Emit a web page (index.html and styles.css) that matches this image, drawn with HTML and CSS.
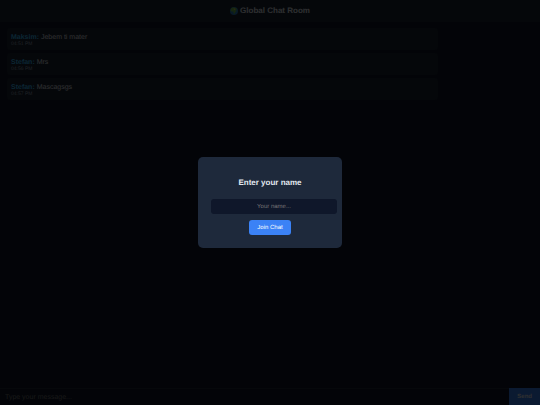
FILE: index.html
```html
<!DOCTYPE html>
<html lang="en">
<head>
    <meta charset="UTF-8">
    <meta name="viewport" content="width=device-width, initial-scale=1.0">
    <title>Global Chat Room</title>
    <link rel="stylesheet" href="styles.css">
</head>
<body>
    <header>
        <svg class="globe" viewBox="0 0 16 16" aria-hidden="true">
            <circle cx="8" cy="8" r="8" fill="#2a7fc4"/>
            <path d="M2 3 L5 1 L9 1 L13 3 L14 5 L11 6 L13 8 L10 11 L9 14 L7 13 L7 9 L3 9 L1 7 Z" fill="#6fbf4b"/>
            <path d="M7 3 L10 3 L11 5 L8 6 Z" fill="#d9c870"/>
        </svg>
        <h1>Global Chat Room</h1>
    </header>

    <main id="messages">
        <div class="message">
            <div><span class="username">Maksim:</span> Jebem ti mater</div>
            <div class="time">04:51 PM</div>
        </div>
        <div class="message">
            <div><span class="username">Stefan:</span> Mrs</div>
            <div class="time">04:56 PM</div>
        </div>
        <div class="message">
            <div><span class="username">Stefan:</span> Mascagsgs</div>
            <div class="time">04:57 PM</div>
        </div>
    </main>

    <form class="input-area">
        <input type="text" id="messageInput" placeholder="Type your message..." aria-label="Message">
        <button type="button">Send</button>
    </form>

    <div class="overlay">
        <div class="modal" role="dialog" aria-labelledby="modalTitle">
            <h2 id="modalTitle">Enter your name</h2>
            <input type="text" id="nameInput" placeholder="Your name..." aria-labelledby="modalTitle">
            <button type="button">Join Chat</button>
        </div>
    </div>
</body>
</html>
```

FILE: styles.css
```css
body {
    margin: 0;
    height: 100vh;
    display: flex;
    flex-direction: column;
    background: #0f172a;
    color: #e2e8f0;
    font-family: "Liberation Sans", Arial, sans-serif;
    font-size: 7px;
    text-rendering: geometricPrecision;
}
header {
    display: flex;
    justify-content: center;
    align-items: center;
    gap: 2px;
    padding: 6px;
    background: #1a2332;
}
.globe {
    width: 8px;
    height: 8px;
}
h1 {
    margin: 0;
    font-size: 8px;
    line-height: 10px;
}
#messages {
    flex: 1;
    display: flex;
    flex-direction: column;
    align-items: flex-start;
    gap: 3px;
    padding: 6px 7px;
    overflow-y: auto;
}
.message {
    box-sizing: border-box;
    width: 82%;
    padding: 5px 4px 3px;
    border-radius: 3px;
    background: #1a2332;
    line-height: 9px;
}
.username {
    color: #38bdf8;
    font-weight: bold;
}
.time {
    color: #94a3b8;
    font-size: 5px;
    line-height: 5px;
}
input,
button {
    border: none;
    outline: none;
    font-family: inherit;
    text-rendering: inherit;
}
input {
    color: #e2e8f0;
}
input::placeholder {
    color: #757575;
}
button {
    background: #3b82f6;
    color: #fff;
    cursor: pointer;
}
.input-area {
    display: flex;
    height: 17px;
    margin: 0;
}
.input-area input {
    flex: 1;
    padding: 0 5px;
    background: #0f172a;
    border-top: 1px solid #1e293b;
    font-size: 7px;
}
.input-area button {
    padding: 0 8px;
    color: #e2e8f0;
    font-size: 6px;
    font-weight: bold;
}
.overlay {
    position: fixed;
    inset: 0;
    display: flex;
    justify-content: center;
    align-items: center;
    background: rgba(0, 0, 0, 0.8);
}
.modal {
    width: 118px;
    padding: 13px;
    display: flex;
    flex-direction: column;
    align-items: center;
    border-radius: 5px;
    background: #1e293b;
}
.modal h2 {
    margin: 8px 0 11px;
    font-size: 8px;
    line-height: 10px;
}
/* full width plus its own padding */
.modal input {
    box-sizing: content-box;
    align-self: flex-start;
    width: 100%;
    height: 15px;
    padding: 0 4px;
    border-radius: 3px;
    background: #0f172a;
    font-size: 6px;
    text-align: center;
}
.modal button {
    height: 15px;
    margin-top: 6px;
    padding: 0 8px;
    border-radius: 3px;
    font-size: 6px;
}
```
